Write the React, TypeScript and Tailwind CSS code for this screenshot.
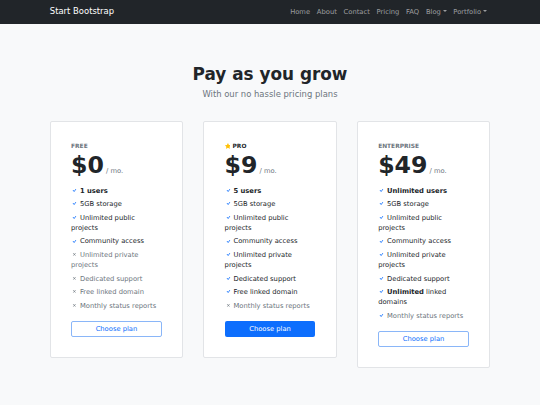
import React from 'react';

type Feature = { text: React.ReactNode; ok: boolean; muted?: boolean };

type Plan = {
  name: string;
  price: string;
  star?: boolean;
  primary?: boolean;
  features: Feature[];
};

const plans: Plan[] = [
  {
    name: 'Free',
    price: '$0',
    features: [
      { text: <strong className="font-bold">1 users</strong>, ok: true },
      { text: '5GB storage', ok: true },
      { text: 'Unlimited public projects', ok: true },
      { text: 'Community access', ok: true },
      { text: 'Unlimited private projects', ok: false },
      { text: 'Dedicated support', ok: false },
      { text: 'Free linked domain', ok: false },
      { text: 'Monthly status reports', ok: false },
    ],
  },
  {
    name: 'Pro',
    price: '$9',
    star: true,
    primary: true,
    features: [
      { text: <strong className="font-bold">5 users</strong>, ok: true },
      { text: '5GB storage', ok: true },
      { text: 'Unlimited public projects', ok: true },
      { text: 'Community access', ok: true },
      { text: 'Unlimited private projects', ok: true },
      { text: 'Dedicated support', ok: true },
      { text: 'Free linked domain', ok: true },
      { text: 'Monthly status reports', ok: false },
    ],
  },
  {
    name: 'Enterprise',
    price: '$49',
    features: [
      { text: <strong className="font-bold">Unlimited users</strong>, ok: true },
      { text: '5GB storage', ok: true },
      { text: 'Unlimited public projects', ok: true },
      { text: 'Community access', ok: true },
      { text: 'Unlimited private projects', ok: true },
      { text: 'Dedicated support', ok: true },
      {
        text: (
          <>
            <strong className="font-bold">Unlimited</strong> linked domains
          </>
        ),
        ok: true,
      },
      { text: 'Monthly status reports', ok: true, muted: true },
    ],
  },
];

function CheckIcon() {
  return (
    <svg viewBox="0 0 16 16" fill="currentColor" className="inline-block w-[1em] h-[1em] align-[-0.125em] text-[#0d6efd]">
      <path d="M10.97 4.97a.75.75 0 0 1 1.071 1.05l-3.992 4.99a.75.75 0 0 1-1.08.02L4.324 8.384a.75.75 0 1 1 1.06-1.06l2.094 2.093 3.473-4.425a.267.267 0 0 1 .02-.022z" />
    </svg>
  );
}

function XIcon() {
  return (
    <svg viewBox="0 0 16 16" fill="currentColor" className="inline-block w-[1em] h-[1em] align-[-0.125em]">
      <path d="M4.646 4.646a.5.5 0 0 1 .708 0L8 7.293l2.646-2.647a.5.5 0 0 1 .708.708L8.707 8l2.647 2.646a.5.5 0 0 1-.708.708L8 8.707l-2.646 2.647a.5.5 0 0 1-.708-.708L7.293 8 4.646 5.354a.5.5 0 0 1 0-.708z" />
    </svg>
  );
}

function StarIcon() {
  return (
    <svg viewBox="0 0 16 16" fill="currentColor" className="inline-block w-[1em] h-[1em] align-[-0.125em] text-[#ffc107]">
      <path d="M3.612 15.443c-.386.198-.824-.149-.746-.592l.83-4.73L.173 6.765c-.329-.314-.158-.888.283-.95l4.898-.696L7.538.792c.197-.39.73-.39.927 0l2.184 4.327 4.898.696c.441.062.612.636.282.95l-3.522 3.356.83 4.73c.078.443-.36.79-.746.592L8 13.187l-4.389 2.256z" />
    </svg>
  );
}

function Caret() {
  return (
    <span className="inline-block ml-[0.255em] align-[0.255em] w-0 h-0 border-t-[0.3em] border-t-current border-x-[0.3em] border-x-transparent" />
  );
}

function PlanCard({ plan }: { plan: Plan }) {
  return (
    <div className="bg-white border border-[#e2e4e7] rounded-[2px] p-[20.25px]">
      <div
        className={`text-[5.9px] leading-[1.5] uppercase font-bold ${
          plan.star ? 'text-[#212529]' : 'text-[#6c757d]'
        }`}
      >
        {plan.star && (
          <>
            <StarIcon />{' '}
          </>
        )}
        {plan.name}
      </div>
      <div className="mb-[6.75px]">
        <span className="text-[23.625px] leading-[1.2] font-bold">{plan.price}</span>{' '}
        <span className="text-[#6c757d]">/ mo.</span>
      </div>
      <ul className="mb-[10.125px]">
        {plan.features.map((f, i) => {
          const last = i === plan.features.length - 1;
          const muted = !f.ok || f.muted;
          return (
            <li key={i} className={`${last ? '' : 'mb-[3.375px]'} ${muted ? 'text-[#6c757d]' : ''}`}>
              {f.ok ? <CheckIcon /> : <XIcon />} {f.text}
            </li>
          );
        })}
      </ul>
      {plan.primary ? (
        <a
          href="#!"
          className="flex items-center justify-center h-[16px] rounded-[2px] bg-[#0d6efd] text-white"
        >
          Choose plan
        </a>
      ) : (
        <a
          href="#!"
          className="flex items-center justify-center h-[16px] rounded-[2px] border border-[#8ab6f8] text-[#0d6efd]"
        >
          Choose plan
        </a>
      )}
    </div>
  );
}

export default function App() {
  const links = ['Home', 'About', 'Contact', 'Pricing', 'FAQ'];
  return (
    <div className="min-h-[405px] bg-[#f8f9fa] font-['DejaVu_Sans',sans-serif] text-[6.75px] leading-[1.5] text-[#212529]">
      {/* Navbar */}
      <nav className="bg-[#212529] h-[23.6px]">
        <div className="w-[440.4px] mx-auto h-full flex items-center justify-between">
          <span className="text-[8.44px] text-white">Start Bootstrap</span>
          <ul className="flex text-[rgba(255,255,255,0.55)]">
            {links.map((l) => (
              <li key={l} className="px-[3.375px]">
                {l}
              </li>
            ))}
            <li className="px-[3.375px]">
              Blog
              <Caret />
            </li>
            <li className="px-[3.375px]">
              Portfolio
              <Caret />
            </li>
          </ul>
        </div>
      </nav>

      {/* Pricing */}
      <section className="py-[20.25px]">
        <div className="w-[440.4px] mx-auto my-[20.25px]">
          <div className="text-center mb-[20.25px]">
            <h1 className="text-[16.875px] leading-[1.2] font-bold mb-[3.375px]">Pay as you grow</h1>
            <p className="text-[8.4375px] leading-[1.5] text-[#6c757d]">With our no hassle pricing plans</p>
          </div>
          <div className="grid grid-cols-3 gap-x-[20.25px] items-start">
            {plans.map((p) => (
              <PlanCard key={p.name} plan={p} />
            ))}
          </div>
        </div>
      </section>
    </div>
  );
}
